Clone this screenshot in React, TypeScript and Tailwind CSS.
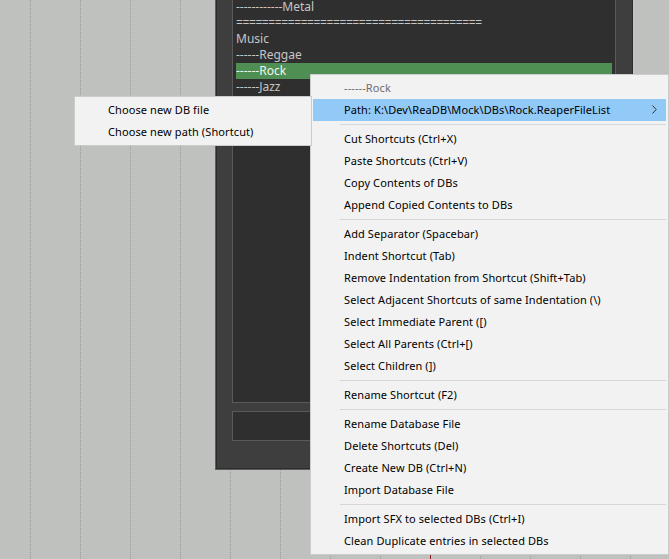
import React from 'react';

type Item = { label?: string; sep?: boolean; disabled?: boolean; active?: boolean; arrow?: boolean };

const menuItems: Item[] = [
    { label: '------Rock', disabled: true },
    { label: 'Path: K:\\Dev\\ReaDB\\Mock\\DBs\\Rock.ReaperFileList', active: true, arrow: true },
    { sep: true },
    { label: 'Cut Shortcuts (Ctrl+X)' },
    { label: 'Paste Shortcuts (Ctrl+V)' },
    { label: 'Copy Contents of DBs' },
    { label: 'Append Copied Contents to DBs' },
    { sep: true },
    { label: 'Add Separator (Spacebar)' },
    { label: 'Indent Shortcut (Tab)' },
    { label: 'Remove Indentation from Shortcut (Shift+Tab)' },
    { label: 'Select Adjacent Shortcuts of same Indentation (\\)' },
    { label: 'Select Immediate Parent ([)' },
    { label: 'Select All Parents (Ctrl+[)' },
    { label: 'Select Children (])' },
    { sep: true },
    { label: 'Rename Shortcut (F2)' },
    { sep: true },
    { label: 'Rename Database File' },
    { label: 'Delete Shortcuts (Del)' },
    { label: 'Create New DB (Ctrl+N)' },
    { label: 'Import Database File' },
    { sep: true },
    { label: 'Import SFX to selected DBs (Ctrl+I)' },
    { label: 'Clean Duplicate entries in selected DBs' },
];

const subItems: Item[] = [{ label: 'Choose new DB file' }, { label: 'Choose new path (Shortcut)' }];

const MenuRows = ({ items }: { items: Item[] }) => (
    <>
        {items.map((it, i) =>
            it.sep ? (
                <div key={i} className="flex h-[7px] items-center pl-[27px]">
                    <div className="h-px w-full bg-[#d7d7d7]" />
                </div>
            ) : (
                <div
                    key={i}
                    className={`flex h-[22px] items-center pl-[31px] pr-[9px] ${
                        it.active ? 'bg-[#91c9f7]' : ''
                    } ${it.disabled ? 'text-[#6d6d6d]' : 'text-black'}`}
                >
                    <span className="flex-1 whitespace-nowrap">{it.label}</span>
                    {it.arrow && (
                        <svg width="5" height="9" viewBox="0 0 5 9" className="mb-px">
                            <polyline points="0.5,0.5 4.2,4.5 0.5,8.5" fill="none" stroke="#333" strokeWidth="1" />
                        </svg>
                    )}
                </div>
            ),
        )}
    </>
);

const listRows = [
    { t: '------------Metal' },
    { t: '======================================', eq: true },
    { t: 'Music' },
    { t: '------Reggae' },
    { t: '------Rock', sel: true },
    { t: '------Jazz' },
];

export default function App() {
    return (
        <div className="relative flex h-[559px] w-[669px] overflow-hidden bg-[#bfc1bf] font-['Noto_Sans',sans-serif]">
            {/* arrange view grid */}
            <div className="flex flex-1">
                <div className="w-[30px] shrink-0" />
                {Array.from({ length: 13 }).map((_, i) => (
                    <div key={i} className="w-[50px] shrink-0 border-l border-dotted border-[#9b9d9b]" />
                ))}
            </div>

            {/* right strip */}
            <div className="flex w-[27px] shrink-0">
                <div className="w-px bg-[#2b2b2b]" />
                <div className="w-[13px] bg-[#474747]" />
                <div className="w-[4px] bg-[#303030]" />
                <div className="flex w-[9px] flex-col bg-[#5e5e5e]">
                    <div className="mt-[14px] h-[3px] bg-[#75661d]" />
                    <div className="mt-[5px] h-[3px] bg-[#75661d]" />
                    <div className="mt-[9px] h-[3px] bg-[#75661d]" />
                    <div className="mt-[6px] h-[3px] bg-[#75661d]" />
                </div>
            </div>

            {/* play cursor */}
            <div className="absolute left-[430px] top-0 h-full w-px bg-[#8c1a1a]" />

            {/* floating window */}
            <div className="absolute left-[215px] top-[-30px] h-[500px] w-[419px] border border-[#5d5d5d] border-r-[#c6c8c6]">
                <div className="flex h-full flex-col border border-[#2c2c2c] bg-[#3e3e3e] pb-[27px] pl-[15px] pr-[16px] pt-[18px]">
                    <div className="h-[413px] w-[384px] border border-[#5a5a5a] bg-[#2f2f2f] px-[3px] pt-[8px] text-[12px]">
                        {listRows.map((r) => (
                            <div
                                key={r.t}
                                className={`flex h-[16px] items-center whitespace-nowrap ${
                                    r.sel ? 'bg-[#508f53] text-[#eef5ee]' : 'text-[#c6c6c6]'
                                } ${r.eq ? 'tracking-[-0.4px]' : ''}`}
                            >
                                {r.t}
                            </div>
                        ))}
                    </div>
                    <div className="mt-[8px] h-[30px] w-[384px] border border-[#5a5a5a] bg-[#2f2f2f]" />
                </div>
            </div>

            {/* context menu */}
            <div className="absolute left-[310px] top-[74px] w-[359px] border border-[#cccccc] bg-[#f2f2f2] px-[2px] py-[2px] text-[11px] tracking-[0.1px]">
                <MenuRows items={menuItems} />
            </div>

            {/* submenu */}
            <div className="absolute left-[74px] top-[96px] w-[238px] border border-[#cccccc] bg-[#f2f2f2] px-[2px] py-[2px] text-[11px] tracking-[0.1px]">
                <MenuRows items={subItems} />
            </div>
        </div>
    );
}
